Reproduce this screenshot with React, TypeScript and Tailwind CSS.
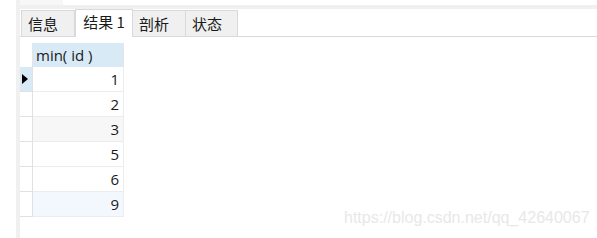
import React from 'react'

const tabs = [
  { label: '信息', w: 'w-[54px]' },
  { label: '结果 1', w: 'w-[58px]', active: true },
  { label: '剖析', w: 'w-[54px]' },
  { label: '状态', w: 'w-[53px]' },
]

const rows = [
  { v: '1', bg: 'bg-white', current: true },
  { v: '2', bg: 'bg-white' },
  { v: '3', bg: 'bg-[#f7f7f7]' },
  { v: '5', bg: 'bg-white' },
  { v: '6', bg: 'bg-white' },
  { v: '9', bg: 'bg-[#f2f8fd]' },
]

export default function App() {
  return (
    <div className="relative flex h-[238px] w-[597px] overflow-hidden bg-white font-['Open_Sans','Noto_Sans_CJK_SC',sans-serif] text-[#1a1a1a]">
      {/* 왼쪽 여백 + 회색 스트립 */}
      <div className="w-[16px] shrink-0" />
      <div className="w-[4px] shrink-0 bg-[#f0f0f0]" />

      <div className="flex flex-1 flex-col">
        {/* 상단 띠 */}
        <div className="flex h-[5px]">
          <div className="w-[43px] bg-[#f7f7f7]" />
        </div>
        <div className="h-[4px] bg-[#f0f0f0]" />

        {/* 탭 */}
        <div className="flex h-[28px] items-end">
          <div className="h-[27px] w-[2px] border-b border-[#d9d9d9]" />
          {tabs.map((t) =>
            t.active ? (
              <div
                key={t.label}
                className={`${t.w} flex h-[28px] items-center justify-center border-x border-t border-[#d9d9d9] bg-white pb-[2px] font-['Noto_Sans_CJK_SC',sans-serif] text-[15px]`}
              >
                {t.label}
              </div>
            ) : (
              <div
                key={t.label}
                className={`${t.w} -ml-px flex h-[27px] items-center border border-[#d9d9d9] bg-[#f0f0f0] pl-[6px] pt-[1px] font-['Noto_Sans_CJK_SC',sans-serif] text-[15px] first:ml-0`}
              >
                {t.label}
              </div>
            )
          )}
          <div className="h-[27px] flex-1 border-b border-[#d9d9d9]" />
        </div>

        {/* 결과 그리드 */}
        <div className="mt-[6px] flex flex-col">
          <div className="flex h-[24px]">
            <div className="w-[13px] border-r border-[#e5e5e5] bg-white" />
            <div className="flex w-[91px] items-center border-r border-[#e5e5e5] bg-[#d9eaf7] pl-[3px] text-[15px]">
              min( id )
            </div>
          </div>
          {rows.map((r) => (
            <div key={r.v} className="flex h-[25px]">
              <div
                className={`flex w-[13px] items-center border-b border-r border-[#e1e1e1] ${r.current ? 'bg-[#d9eaf7]' : 'bg-white'}`}
              >
                {r.current && (
                  <svg width="6" height="10" viewBox="0 0 6 10" className="ml-[2px]">
                    <path d="M0 0 L6 5 L0 10 Z" fill="#000" />
                  </svg>
                )}
              </div>
              <div
                className={`flex w-[91px] items-center justify-end border-b border-r border-[#ececec] pr-[4px] text-[15px] ${r.bg}`}
              >
                {r.v}
              </div>
            </div>
          ))}
        </div>
      </div>

      {/* 워터마크 */}
      <div className="absolute left-[344px] top-[206px] font-['Liberation_Sans',sans-serif] text-[16px] text-[#e8e8e8]">
        https://blog.csdn.net/qq_42640067
      </div>
    </div>
  )
}
